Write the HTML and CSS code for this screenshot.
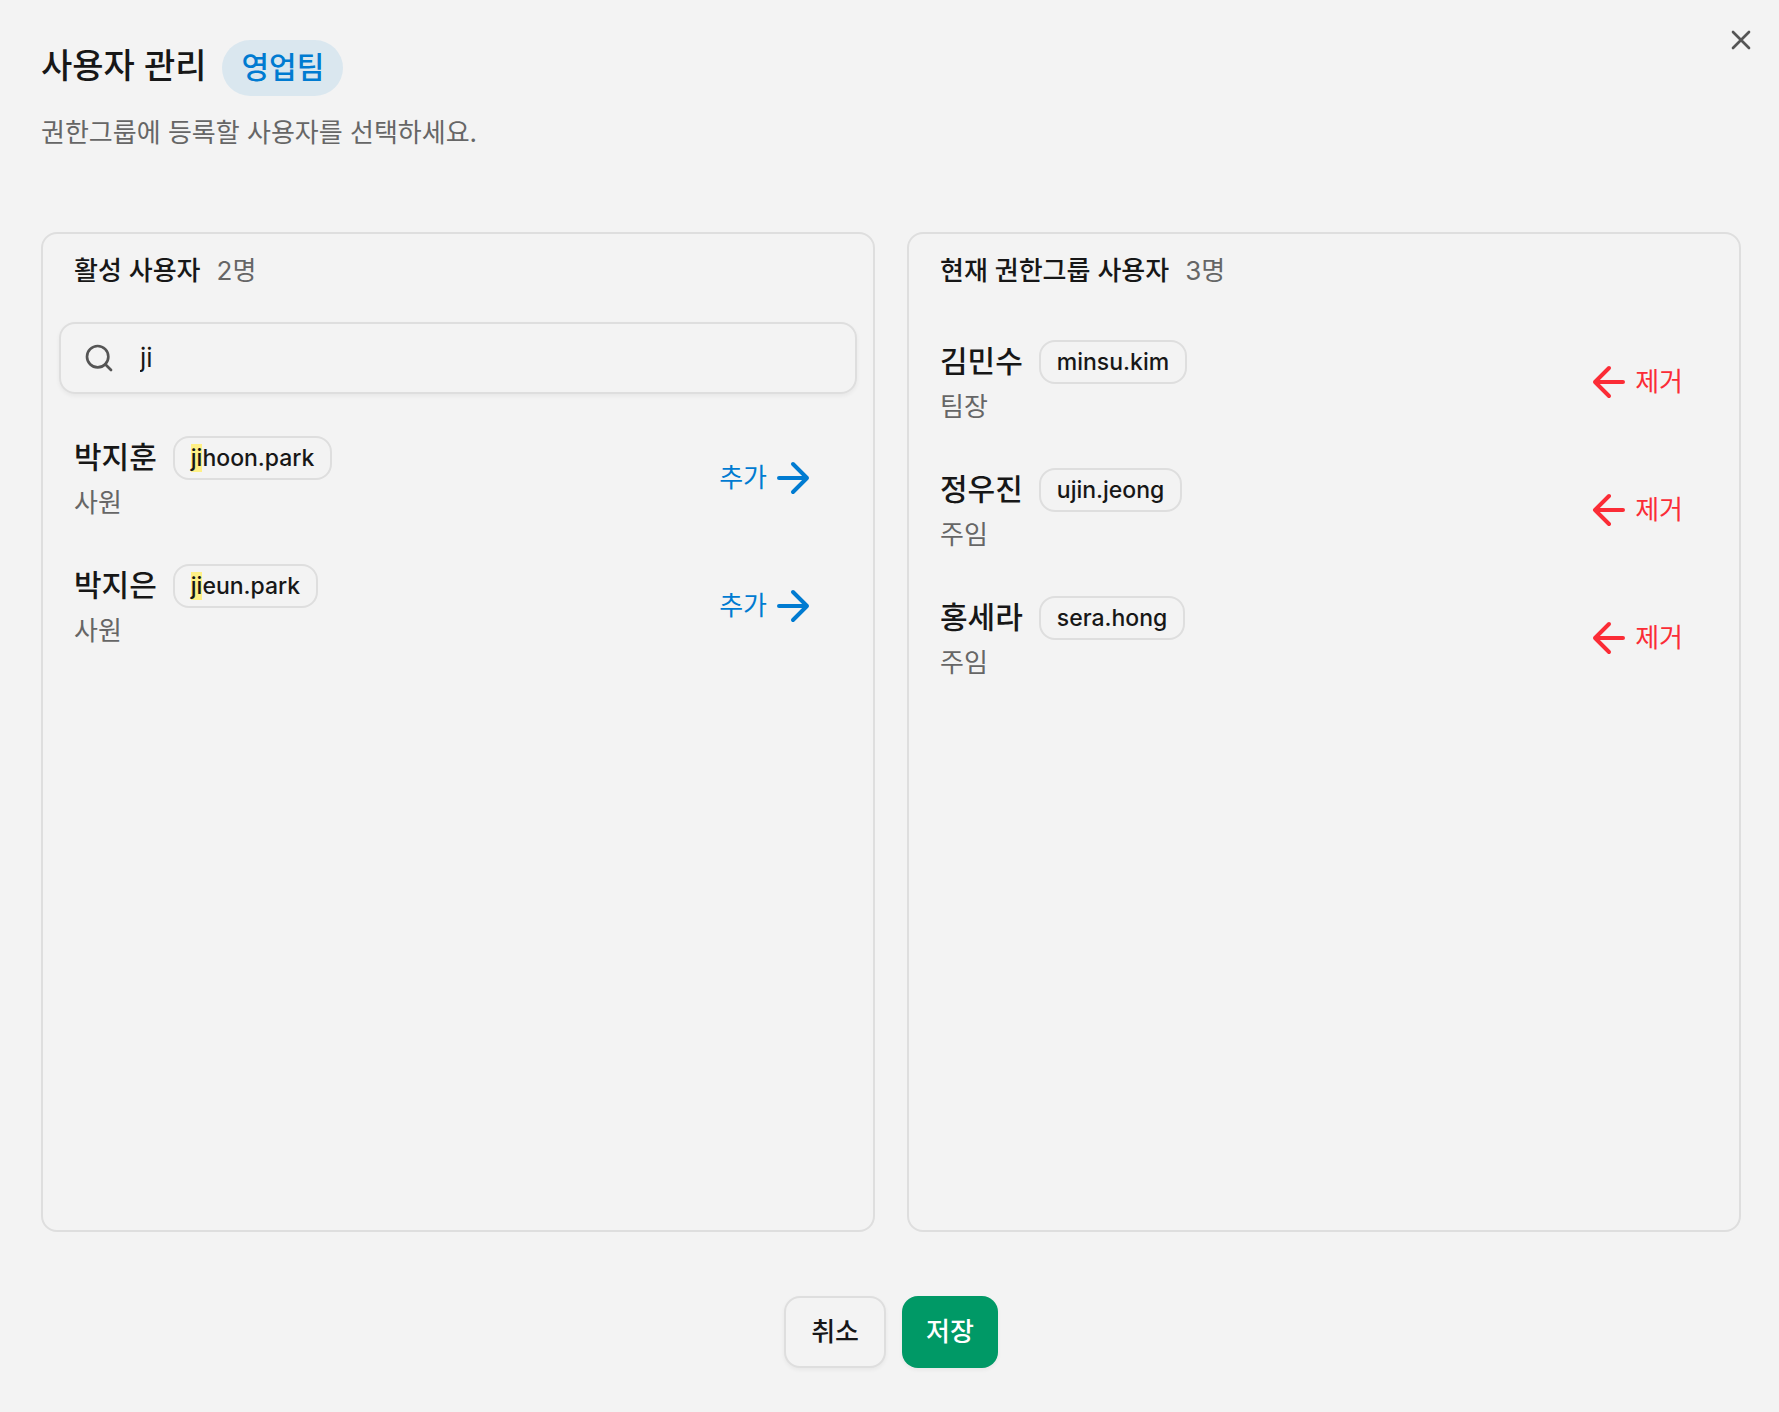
FILE: index.html
```html
<!DOCTYPE html>
<html lang="ko">
<head>
<meta charset="utf-8">
<meta name="viewport" content="width=device-width, initial-scale=1">
<title>사용자 관리</title>
<link rel="stylesheet" href="styles.css">
</head>
<body>
<svg class="sprite" aria-hidden="true">
  <symbol id="arrow-right" viewBox="0 0 24 24"><path d="M5 12h14M12 5l7 7-7 7"/></symbol>
  <symbol id="arrow-left" viewBox="0 0 24 24"><path d="M19 12H5M12 19l-7-7 7-7"/></symbol>
  <symbol id="search" viewBox="0 0 24 24"><circle cx="11" cy="11" r="8"/><path d="M21 21l-4.3-4.3"/></symbol>
  <symbol id="close" viewBox="0 0 24 24"><path d="M18 6L6 18M6 6l12 12"/></symbol>
</svg>
<main class="dialog">
  <button class="close" type="button" aria-label="닫기"><svg class="icon"><use href="#close"/></svg></button>
  <header class="header">
    <div class="title-row">
      <h1 class="title">사용자 관리</h1>
      <span class="group-badge">영업팀</span>
    </div>
    <p class="description">권한그룹에 등록할 사용자를 선택하세요.</p>
  </header>

  <div class="panels">
    <section class="panel">
      <div class="panel-head"><h2 class="panel-title">활성 사용자</h2><span class="count">2명</span></div>
      <div class="search">
        <svg class="icon"><use href="#search"/></svg>
        <input class="search-input" type="text" value="ji" aria-label="사용자 검색">
      </div>
      <ul class="users users-searched">
        <li class="user">
          <div class="info">
            <div class="name-row"><span class="name">박지훈</span><span class="account"><mark>ji</mark>hoon.park</span></div>
            <span class="role">사원</span>
          </div>
          <button class="move move-add" type="button">추가<svg class="arrow"><use href="#arrow-right"/></svg></button>
        </li>
        <li class="user">
          <div class="info">
            <div class="name-row"><span class="name">박지은</span><span class="account"><mark>ji</mark>eun.park</span></div>
            <span class="role">사원</span>
          </div>
          <button class="move move-add" type="button">추가<svg class="arrow"><use href="#arrow-right"/></svg></button>
        </li>
      </ul>
    </section>

    <section class="panel">
      <div class="panel-head"><h2 class="panel-title">현재 권한그룹 사용자</h2><span class="count">3명</span></div>
      <ul class="users">
        <li class="user">
          <div class="info">
            <div class="name-row"><span class="name">김민수</span><span class="account">minsu.kim</span></div>
            <span class="role">팀장</span>
          </div>
          <button class="move move-remove" type="button"><svg class="arrow"><use href="#arrow-left"/></svg>제거</button>
        </li>
        <li class="user">
          <div class="info">
            <div class="name-row"><span class="name">정우진</span><span class="account">ujin.jeong</span></div>
            <span class="role">주임</span>
          </div>
          <button class="move move-remove" type="button"><svg class="arrow"><use href="#arrow-left"/></svg>제거</button>
        </li>
        <li class="user">
          <div class="info">
            <div class="name-row"><span class="name">홍세라</span><span class="account">sera.hong</span></div>
            <span class="role">주임</span>
          </div>
          <button class="move move-remove" type="button"><svg class="arrow"><use href="#arrow-left"/></svg>제거</button>
        </li>
      </ul>
    </section>
  </div>

  <footer class="footer">
    <button class="btn btn-cancel" type="button">취소</button>
    <button class="btn btn-save" type="button">저장</button>
  </footer>
</main>
</body>
</html>
```
FILE: styles.css
```css
* { box-sizing: border-box; }

body {
  margin: 0;
  background: #f3f3f3;
  color: #171717;
  font: 400 26px/42px Inter, "Noto Sans CJK KR", sans-serif;
}

button, input { font: inherit; color: inherit; }
button { cursor: pointer; }
h1, h2, p, ul { margin: 0; padding: 0; }
ul { list-style: none; }

.sprite { display: none; }

.icon, .arrow {
  display: block;
  flex: none;
  fill: none;
  stroke: currentColor;
  stroke-width: 2;
  stroke-linecap: round;
  stroke-linejoin: round;
}
.icon { width: 32px; height: 32px; }
.arrow { width: 48px; height: 48px; }

.dialog {
  position: relative;
  display: flex;
  flex-direction: column;
  min-height: 100vh;
  padding: 40px 38px 44px 41px;
}

.close {
  position: absolute;
  top: 24px;
  right: 22px;
  padding: 0;
  border: 0;
  background: none;
  color: #555;
}

.title-row { display: flex; align-items: flex-start; gap: 16px; }
.title { font-size: 34px; font-weight: 500; line-height: 52px; }
.group-badge {
  padding: 7px 19px 9px;
  border-radius: 28px;
  background: #dae7ef;
  color: #007bd1;
  font-size: 30px;
  font-weight: 500;
  line-height: 40px;
}
.description { margin-top: 16px; color: #666; }

.panels {
  display: grid;
  grid-template-columns: 1fr 1fr;
  gap: 32px;
  flex: 1;
  margin-top: 78px;
}
.panel {
  padding: 16px;
  border: 2px solid #dedede;
  border-radius: 16px;
}
.panel-head { display: flex; gap: 16px; padding: 0 15px; }
.panel-title { font-size: 26px; font-weight: 500; line-height: 42px; }
.count { color: #666; }

.search {
  display: flex;
  align-items: center;
  gap: 25px;
  height: 72px;
  margin-top: 30px;
  padding: 0 22px;
  border: 2px solid #dedede;
  border-radius: 16px;
  color: #555;
  box-shadow: 0 2px 4px rgba(0, 0, 0, 0.05);
}
.search-input {
  flex: 1;
  min-width: 0;
  padding: 0;
  border: 0;
  outline: 0;
  background: none;
  color: #171717;
}

.users { margin-top: 26px; }
.users-searched { margin-top: 20px; }
.user {
  display: flex;
  align-items: center;
  justify-content: space-between;
  height: 128px;
  padding: 0 40px 0 15px;
}
.info { align-self: flex-start; padding-top: 22px; }
.name-row { display: flex; align-items: flex-start; gap: 16px; }
.name { font-size: 30px; font-weight: 500; }
.account {
  padding: 6px 16px;
  border: 2px solid #dedede;
  border-radius: 16px;
  font-size: 23px;
  font-weight: 500;
  line-height: 28px;
}
.account mark { background: #fff085; color: inherit; }
.role { display: block; margin-top: 2px; color: #666; }

.move {
  display: flex;
  align-items: center;
  gap: 2px;
  padding: 0;
  border: 0;
  background: none;
}
.move-add { color: #007bd1; }
.move-remove { color: #fb2c36; }

.footer {
  display: flex;
  justify-content: center;
  gap: 16px;
  margin-top: 64px;
}
.btn {
  height: 72px;
  padding: 0 24px;
  border: 0;
  border-radius: 16px;
  font-weight: 500;
  box-shadow: 0 2px 4px rgba(0, 0, 0, 0.05);
}
.btn-cancel { padding: 0 25px; border: 2px solid #dedede; background: #f3f3f3; }
.btn-save { background: #009966; color: #fff; }
```
